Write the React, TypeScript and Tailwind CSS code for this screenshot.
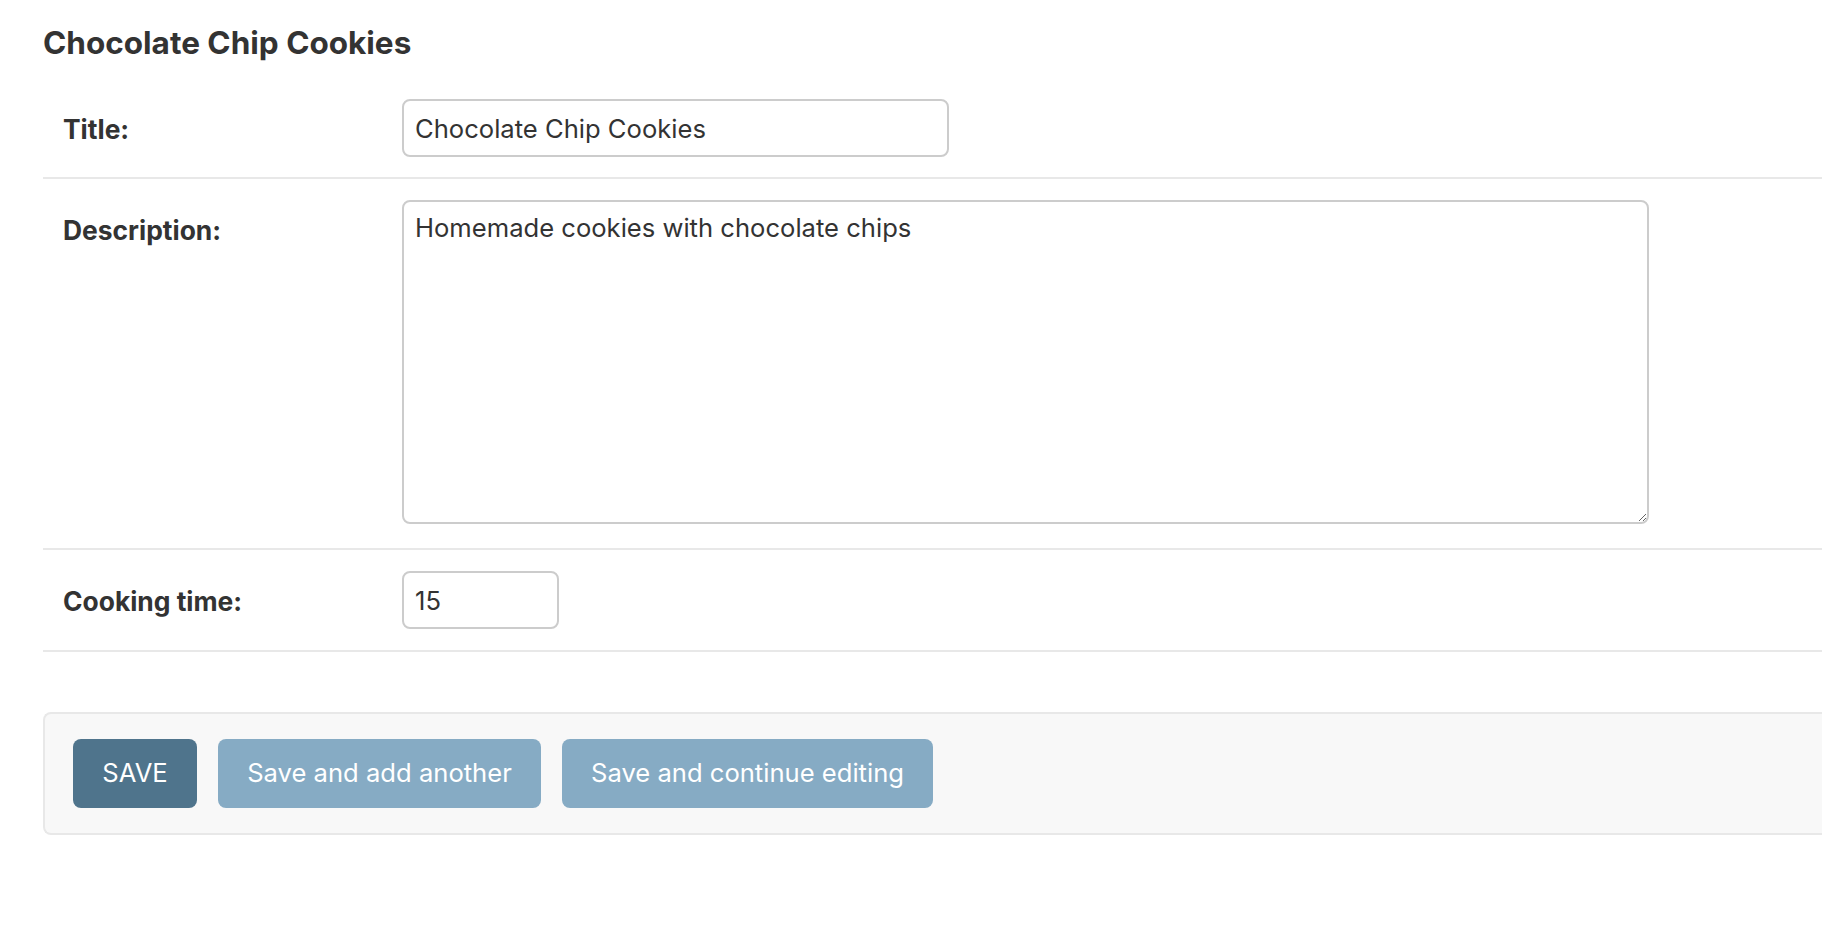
import React from "react";

const font = { fontFamily: "Inter, 'Noto Sans', 'Liberation Sans', sans-serif" };

export default function App() {
  return (
    <div className="min-h-[936px] w-full overflow-hidden bg-white text-[#333]" style={font}>
      <div className="pl-[43px] pt-[23px]">
        <h2 className="m-0 text-[31.5px] font-bold leading-[40px] text-[#333]">Chocolate Chip Cookies</h2>

        <div className="mt-[16px]">
          <div className="flex border-b-2 border-[#e8e8e8] pl-[20px] pt-[20px] pb-[20px]">
            <label className="flex h-[58px] w-[339px] shrink-0 items-center pt-[3px] text-[26.4px] font-bold">Title:</label>
            <input
              type="text"
              defaultValue="Chocolate Chip Cookies"
              className="h-[58px] w-[547px] rounded-[8px] border-2 border-[#cccccc] bg-white px-[11px] text-[25.6px] text-[#333] outline-none"
              style={font}
            />
          </div>

          <div className="flex border-b-2 border-[#e8e8e8] pl-[20px] pt-[21px] pb-[24px]">
            <label className="flex h-[58px] w-[339px] shrink-0 items-center pt-[4px] text-[26.4px] font-bold">Description:</label>
            <textarea
              defaultValue="Homemade cookies with chocolate chips"
              className="block h-[324px] w-[1247px] rounded-[8px] border-2 border-[#cccccc] bg-white px-[11px] py-[10px] text-[25.6px] leading-[32px] text-[#333] outline-none"
              style={font}
            />
          </div>

          <div className="flex border-b-2 border-[#e8e8e8] pl-[20px] pt-[21px] pb-[21px]">
            <label className="flex h-[58px] w-[339px] shrink-0 items-center pt-[3px] text-[26.4px] font-bold">Cooking time:</label>
            <input
              type="text"
              defaultValue="15"
              className="h-[58px] w-[157px] rounded-[8px] border-2 border-[#cccccc] bg-white px-[11px] text-[25.6px] text-[#333] outline-none"
              style={font}
            />
          </div>
        </div>

        <div className="mt-[60px] flex gap-[21px] rounded-l-[8px] border-2 border-r-0 border-[#e8e8e8] bg-[#f8f8f8] px-[28px] py-[25px]">
          <button className="h-[69px] w-[124px] rounded-[8px] bg-[#4f748c] text-[25.6px] uppercase text-white" style={font}>
            Save
          </button>
          <button className="h-[69px] w-[323px] rounded-[8px] bg-[#86abc4] text-[25.6px] text-white" style={font}>
            Save and add another
          </button>
          <button className="h-[69px] w-[371px] rounded-[8px] bg-[#86abc4] text-[25.6px] text-white" style={font}>
            Save and continue editing
          </button>
        </div>
      </div>
    </div>
  );
}
